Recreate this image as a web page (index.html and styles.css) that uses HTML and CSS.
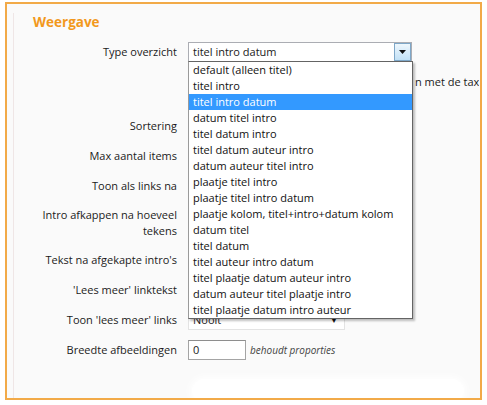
FILE: index.html
```html
<!DOCTYPE html>
<html lang="nl">
<head>
<meta charset="utf-8">
<title>Weergave</title>
<link rel="stylesheet" href="styles.css">
</head>
<body>
<div class="panel">
  <div class="inner">
    <h2 class="title">Weergave</h2>
    <div class="form">
      <div class="row">
        <label class="lbl">Type overzicht</label>
        <div class="field">
          <div class="select wide">
            <span class="val">titel intro datum</span>
            <span class="btn"><svg width="7" height="4" viewBox="0 0 7 4"><polygon points="0,0 7,0 3.5,4" fill="#111"/></svg></span>
          </div>
          <ul class="dropdown">
            <li>default (alleen titel)</li>
            <li>titel intro</li>
            <li class="sel">titel intro datum</li>
            <li>datum titel intro</li>
            <li>titel datum intro</li>
            <li>titel datum auteur intro</li>
            <li>datum auteur titel intro</li>
            <li>plaatje titel intro</li>
            <li>plaatje titel intro datum</li>
            <li>plaatje kolom, titel+intro+datum kolom</li>
            <li>datum titel</li>
            <li>titel datum</li>
            <li>titel auteur intro datum</li>
            <li>titel plaatje datum auteur intro</li>
            <li>datum auteur titel plaatje intro</li>
            <li>titel plaatje datum intro auteur</li>
          </ul>
        </div>
      </div>
      <div class="row tall">
        <label class="lbl"></label>
        <div class="field note"><span class="spacer"></span><span class="clip">n met de taxo</span></div>
      </div>
      <div class="row">
        <label class="lbl">Sortering</label>
        <div class="field"><div class="select mid"></div></div>
      </div>
      <div class="row">
        <label class="lbl">Max aantal items</label>
        <div class="field"><div class="input small"></div></div>
      </div>
      <div class="row">
        <label class="lbl">Toon als links na</label>
        <div class="field"><div class="input small"></div></div>
      </div>
      <div class="row two">
        <label class="lbl">Intro afkappen na hoeveel tekens</label>
        <div class="field"><div class="input small"></div></div>
      </div>
      <div class="row">
        <label class="lbl">Tekst na afgekapte intro's</label>
        <div class="field"><div class="input mid"></div></div>
      </div>
      <div class="row">
        <label class="lbl">'Lees meer' linktekst</label>
        <div class="field"><div class="input mid"></div></div>
      </div>
      <div class="row">
        <label class="lbl">Toon 'lees meer' links</label>
        <div class="field"><div class="select mid light"><span class="val">Nooit</span><span class="caret">&#9660;</span></div></div>
      </div>
      <div class="row">
        <label class="lbl">Breedte afbeeldingen</label>
        <div class="field"><div class="input small dark"><span class="val">0</span></div><span class="hint">behoudt proporties</span></div>
      </div>
    </div>
    <div class="glow"></div>
  </div>
</div>
</body>
</html>
```

FILE: styles.css
```css
html, body {
  margin: 0;
  padding: 0;
  background: #ffffff;
}
body {
  font-family: "Open Sans", "Noto Sans", sans-serif;
  font-size: 11px;
  color: #1a1a1a;
}
.panel {
  margin: 2px 0 0 5px;
  width: 473px;
  height: 394px;
  border: 2px solid #f2aa48;
  background: #fafafa;
  overflow: hidden;
}
.inner {
  margin-left: 6px;
  height: 100%;
  border-left: 1px solid #efe6e6;
  position: relative;
}
.title {
  margin: 9px 0 0 19px;
  font-size: 13.5px;
  line-height: 18px;
  font-weight: bold;
  color: #f2981c;
}
.form {
  margin-top: 11px;
  display: flex;
  flex-direction: column;
  gap: 10px;
}
.row {
  display: flex;
  align-items: flex-start;
  min-height: 20px;
}
.row.tall { min-height: 34px; }
.lbl {
  width: 150px;
  margin-left: 13px;
  text-align: right;
  line-height: 20px;
  flex: none;
}
.row.two .lbl {
  line-height: 16px;
  padding-top: 1px;
  height: 33px;
}
.field {
  margin-left: 11px;
  position: relative;
  display: flex;
  align-items: center;
  gap: 4px;
  white-space: nowrap;
}
.note {
  line-height: 16px;
  padding-top: 2px;
  gap: 0;
}
.spacer {
  display: inline-block;
  width: 227px;
}
.clip {
  display: inline-block;
  width: 64px;
  overflow: hidden;
}
.select, .input {
  box-sizing: border-box;
  height: 20px;
  border: 1px solid #abadb3;
  background: #fff;
  display: flex;
  align-items: center;
  position: relative;
}
.val { padding-left: 4px; line-height: 18px; }
.wide { width: 224px; }
.mid { width: 157px; }
.small { width: 58px; }
.light { border-color: #e3e3e3; }
.dark { border-color: #a4a4a4; border-top-color: #8e8e8e; }
.caret {
  position: absolute;
  right: 6px;
  top: 3px;
  font-size: 8px;
  color: #111;
}
.btn {
  position: absolute;
  right: 0;
  top: 0;
  width: 17px;
  height: 18px;
  box-sizing: border-box;
  border: 1px solid #7ea7c8;
  background: linear-gradient(#eef7fd, #c2e1f6);
  display: flex;
  align-items: center;
  justify-content: center;
}
.dropdown {
  position: absolute;
  left: 0;
  top: 19px;
  width: 225px;
  box-sizing: border-box;
  margin: 0;
  padding: 0;
  list-style: none;
  background: #fff;
  border: 1px solid #646464;
  border-left-color: #9a9a9a;
  box-shadow: 2px 2px 2px rgba(0, 0, 0, 0.25);
  z-index: 5;
}
.dropdown li {
  height: 16px;
  line-height: 16px;
  padding-left: 4px;
  color: #111;
}
.dropdown li.sel {
  background: #3399ff;
  color: #fff;
}
.hint {
  font-style: italic;
  font-size: 10px;
  color: #444;
}
.glow {
  position: absolute;
  left: 178px;
  top: 366px;
  width: 272px;
  height: 24px;
  border-radius: 12px;
  background: #ffffff;
  box-shadow: 0 0 8px 2px #ffffff;
}
```
